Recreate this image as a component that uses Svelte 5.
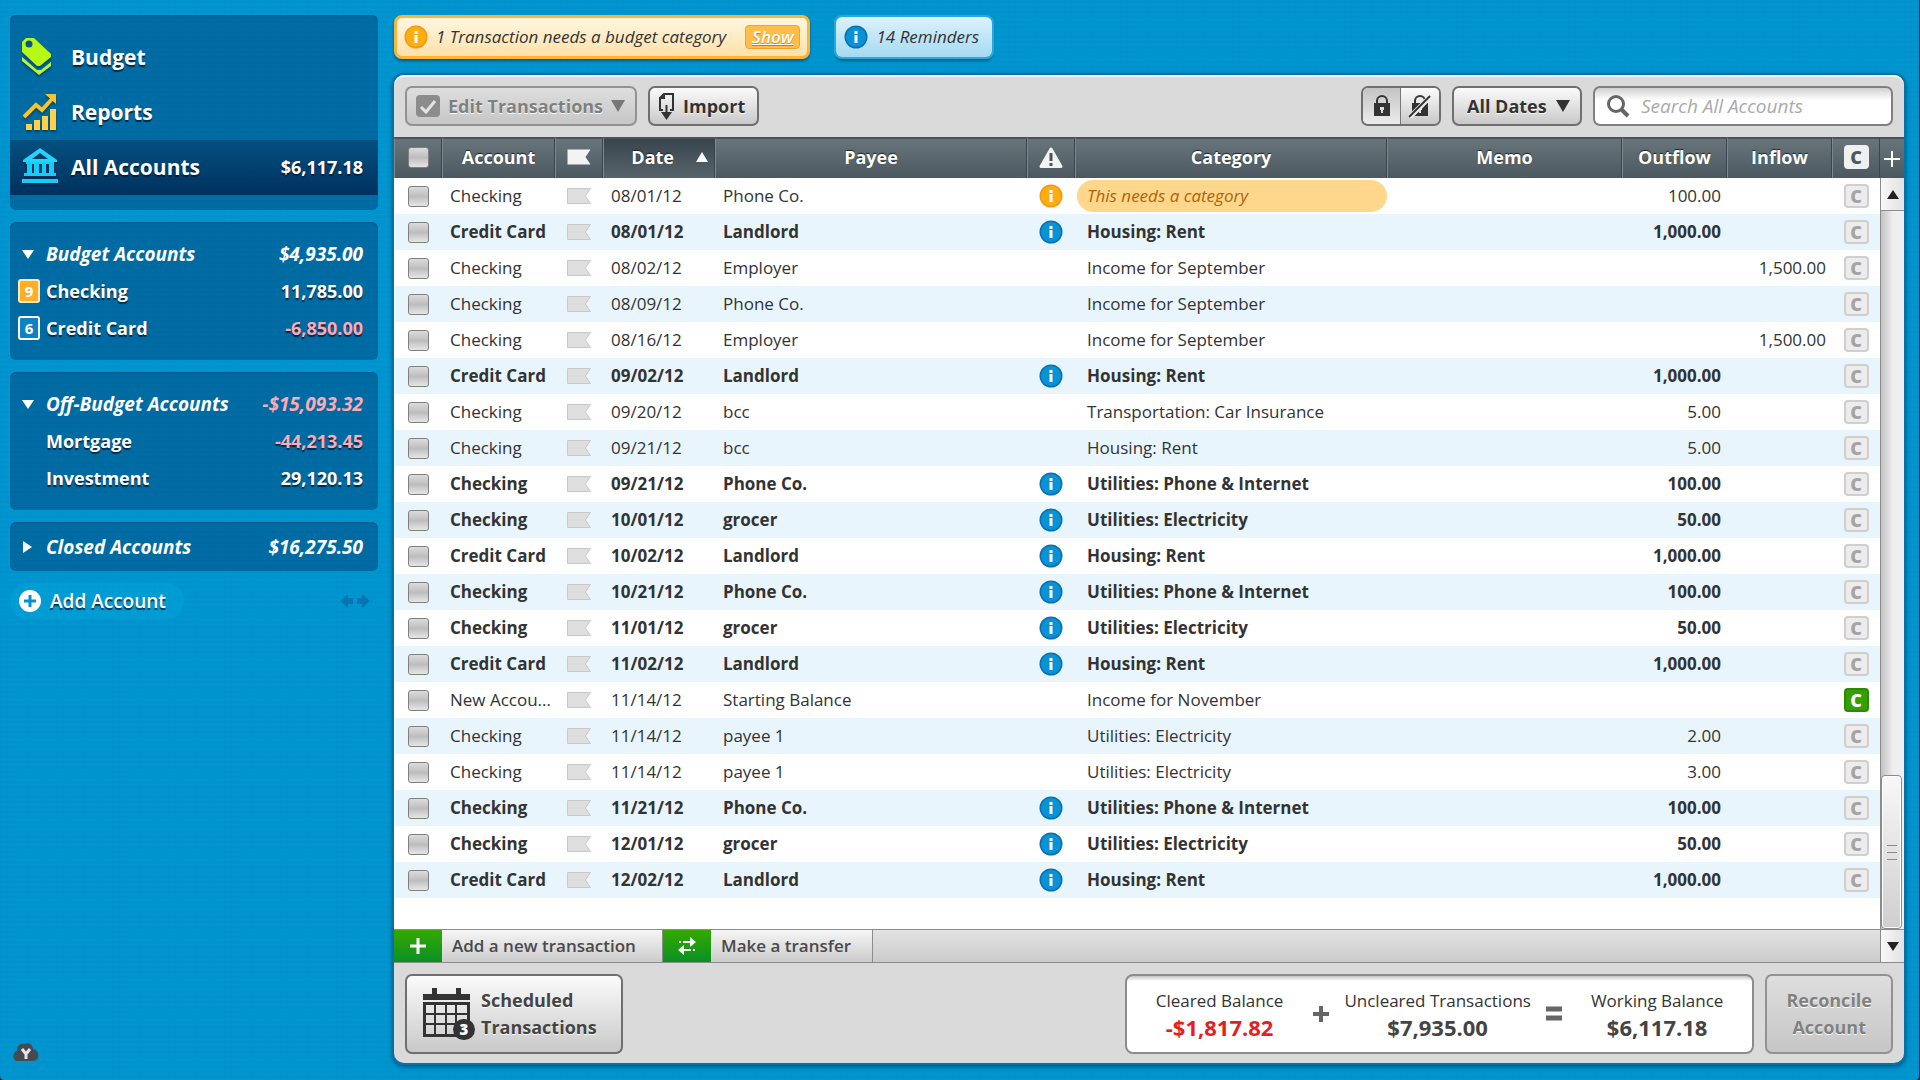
<script>
    let search = "";
    let dateRange = "All Dates";

    const budgetAccounts = [
        { name: "Checking", amount: "11,785.00", badge: "9", badgeColor: "orange" },
        { name: "Credit Card", amount: "-6,850.00", badge: "6", badgeColor: "blue" },
    ];

    const offBudgetAccounts = [
        { name: "Mortgage", amount: "-44,213.45" },
        { name: "Investment", amount: "29,120.13" },
    ];

    const groups = [
        { name: "Budget Accounts", total: "$4,935.00", open: true, accounts: budgetAccounts },
        { name: "Off-Budget Accounts", total: "-$15,093.32", open: true, accounts: offBudgetAccounts },
        { name: "Closed Accounts", total: "$16,275.50", open: false, accounts: [] },
    ];

    // scheduled entries are shown in bold with a blue info icon
    function row(account, date, payee, category, outflow = "", inflow = "", extra = {}) {
        return { account, date, payee, category, outflow, inflow, ...extra };
    }
    const scheduled = { scheduled: true };

    const transactions = [
        row("Checking", "08/01/12", "Phone Co.", "This needs a category", "100.00", "", { missing: true }),
        row("Credit Card", "08/01/12", "Landlord", "Housing: Rent", "1,000.00", "", scheduled),
        row("Checking", "08/02/12", "Employer", "Income for September", "", "1,500.00"),
        row("Checking", "08/09/12", "Phone Co.", "Income for September"),
        row("Checking", "08/16/12", "Employer", "Income for September", "", "1,500.00"),
        row("Credit Card", "09/02/12", "Landlord", "Housing: Rent", "1,000.00", "", scheduled),
        row("Checking", "09/20/12", "bcc", "Transportation: Car Insurance", "5.00"),
        row("Checking", "09/21/12", "bcc", "Housing: Rent", "5.00"),
        row("Checking", "09/21/12", "Phone Co.", "Utilities: Phone & Internet", "100.00", "", scheduled),
        row("Checking", "10/01/12", "grocer", "Utilities: Electricity", "50.00", "", scheduled),
        row("Credit Card", "10/02/12", "Landlord", "Housing: Rent", "1,000.00", "", scheduled),
        row("Checking", "10/21/12", "Phone Co.", "Utilities: Phone & Internet", "100.00", "", scheduled),
        row("Checking", "11/01/12", "grocer", "Utilities: Electricity", "50.00", "", scheduled),
        row("Credit Card", "11/02/12", "Landlord", "Housing: Rent", "1,000.00", "", scheduled),
        row("New Accou...", "11/14/12", "Starting Balance", "Income for November", "", "", { cleared: true }),
        row("Checking", "11/14/12", "payee 1", "Utilities: Electricity", "2.00"),
        row("Checking", "11/14/12", "payee 1", "Utilities: Electricity", "3.00"),
        row("Checking", "11/21/12", "Phone Co.", "Utilities: Phone & Internet", "100.00", "", scheduled),
        row("Checking", "12/01/12", "grocer", "Utilities: Electricity", "50.00", "", scheduled),
        row("Credit Card", "12/02/12", "Landlord", "Housing: Rent", "1,000.00", "", scheduled),
    ];
</script>

{#snippet info(color)}
    <svg class="info-icon" width="24" height="24" viewBox="0 0 24 24" aria-hidden="true">
        <circle cx="12" cy="12" r="11.5" fill={color == "orange" ? "#f09a14" : "#0a70b0"} />
        <circle cx="12" cy="12" r="10" fill={color == "orange" ? "#ffae12" : "#0a92d6"} />
        <path d="M10.5 6h3v3h-3z M10.5 10h3v8h-3z" fill="#fff" />
    </svg>
{/snippet}

{#snippet flag(kind)}
    <svg class="flag {kind}" width="24" height="16" viewBox="0 0 24 16" aria-hidden="true">
        <path d="M0.5 0.5H23.5L18.5 8L23.5 15.5H0.5Z" />
    </svg>
{/snippet}

<div class="page">
    <aside class="sidebar">
        <nav class="box nav">
            <a class="nav-item" href="#budget">
                <svg width="36" height="40" viewBox="0 0 36 40" aria-hidden="true">
                    <path d="M0 20L15 33H19L29 25V29L17 38L0 24Z" fill="#b8f53c" />
                    <path d="M4 1H12L29 17V20L18 29H15L0 15V5Z" fill="#b6f816" />
                    <circle cx="7" cy="7" r="3.5" fill="#00568c" />
                </svg>
                <span>Budget</span>
            </a>
            <a class="nav-item" href="#reports">
                <svg width="36" height="40" viewBox="0 0 36 40" aria-hidden="true">
                    <path d="M2 25L14 13L20 18L30 7" fill="none" stroke="#f9c32a" stroke-width="4" />
                    <path d="M23 2H34V12Z" fill="#f9c32a" />
                    <path d="M4 32h6v6H4z M12 28h6v10h-6z M20 24h6v14h-6z M28 17h6v21h-6z" fill="#ffd04a" />
                </svg>
                <span>Reports</span>
            </a>
            <a class="nav-item selected" href="#accounts">
                <svg width="36" height="40" viewBox="0 0 36 40" aria-hidden="true">
                    <path d="M1 13L18 1L35 13V15H1Z M10 12H26L18 6Z" fill="#22d4fb" fill-rule="evenodd" />
                    <path d="M4 15h28v2H4z M5 16h5v12H5z M12 16h5v12h-5z M20 16h4v12h-4z M27 16h5v12h-5z M2 26h32v3H2z M0 32h36v4H0z" fill="#16cdfa" />
                </svg>
                <span>All Accounts</span>
                <span class="amount">$6,117.18</span>
            </a>
        </nav>

        {#each groups as group}
            <section class="box group" class:closed={!group.open}>
                <button class="line group-head">
                    <svg width="12" height="12" viewBox="0 0 12 12" aria-hidden="true">
                        <path d={group.open ? "M0 2H12L6 11Z" : "M1 0L10 6L1 12Z"} fill="#fff" />
                    </svg>
                    <span>{group.name}</span>
                    <span class="amount" class:negative={group.total.startsWith("-")}>{group.total}</span>
                </button>
                {#each group.accounts as account}
                    <a class="line" href="#account">
                        {#if account.badge}
                            <span class="badge {account.badgeColor}">{account.badge}</span>
                        {/if}
                        <span>{account.name}</span>
                        <span class="amount" class:negative={account.amount.startsWith("-")}>{account.amount}</span>
                    </a>
                {/each}
            </section>
        {/each}

        <div class="add-line">
            <button class="add-account">
                <svg width="22" height="22" viewBox="0 0 22 22" aria-hidden="true">
                    <circle cx="11" cy="11" r="11" fill="#fff" />
                    <path d="M11 5V17M5 11H17" stroke="#078fcb" stroke-width="3" />
                </svg>
                Add Account
            </button>
            <svg class="resize" width="30" height="14" viewBox="0 0 30 14" aria-hidden="true">
                <path d="M0 7L8 0V4H13V10H8V14Z M30 7L22 0V4H17V10H22V14Z" fill="#0775b3" />
            </svg>
        </div>

        <svg class="logo" width="26" height="20" viewBox="0 0 26 20" aria-hidden="true">
            <path d="M5 18C-1 18-1 10 4 8C4 3 7 0 11 1C16-1 20 2 20 6C27 7 27 17 21 18Z" fill="#454b50" />
            <path d="M9 6L13 11L17 6M13 11V16" fill="none" stroke="#e3e3e3" stroke-width="3" />
        </svg>
    </aside>

    <main>
        <div class="alerts">
            <div class="alert warn">
                {@render info("orange")}
                <span>1 Transaction needs a budget category</span>
                <button class="show">Show</button>
            </div>
            <button class="alert note">
                {@render info("blue")}
                <span>14 Reminders</span>
            </button>
        </div>

        <div class="panel">
            <div class="toolbar">
                <button class="btn" disabled>
                    <svg width="24" height="24" viewBox="0 0 24 24" aria-hidden="true">
                        <rect y="1" width="24" height="22" rx="4" fill="#8c8c8c" />
                        <path d="M5 13L10 18L19 7" fill="none" stroke="#e4e4e4" stroke-width="3" />
                    </svg>
                    Edit Transactions
                    <svg class="caret" width="14" height="12" viewBox="0 0 14 12" aria-hidden="true"><path d="M0 0H14L7 12Z" fill="#777" /></svg>
                </button>
                <button class="btn import">
                    <svg width="18" height="28" viewBox="0 0 18 28" aria-hidden="true">
                        <path d="M5 18H2V6L6 2H15V18H12" fill="none" stroke="#333" stroke-width="2" />
                        <path d="M2 7H7V2Z" fill="#333" />
                        <path d="M7.500 13h2v7H14L8.500 28L3 20H7.500Z" fill="#333" />
                    </svg>
                    Import
                </button>

                <div class="locks">
                    <button aria-label="Show reconciled" class="pressed">
                        <svg width="18" height="24" viewBox="0 0 18 24" aria-hidden="true">
                            <path d="M4 10V7a5 5 0 0 1 10 0v3" fill="none" stroke="#333" stroke-width="2" />
                            <path d="M1 9H17V22H1Z" fill="#333" />
                            <path d="M7 13h4v3h-1v3H8v-3H7z" fill="#ddd" />
                        </svg>
                    </button>
                    <button aria-label="Hide reconciled">
                        <svg width="24" height="24" viewBox="0 0 24 24" aria-hidden="true">
                            <path d="M7 10V7a5 5 0 0 1 10 0v3" fill="none" stroke="#333" stroke-width="2" />
                            <path d="M4 9H20V22H4Z" fill="#333" />
                            <path d="M10 13h4v3h-1v3h-2v-3h-1z" fill="#ddd" />
                            <path d="M1 24L23 2" stroke="#eee" stroke-width="5" />
                            <path d="M1 23L22 2" stroke="#333" stroke-width="2" />
                        </svg>
                    </button>
                </div>
                <div class="dates">
                    <select class="btn" aria-label="Date range" bind:value={dateRange}>
                        <option>All Dates</option>
                        <option>This Month</option>
                    </select>
                    <svg width="14" height="12" viewBox="0 0 14 12" aria-hidden="true"><path d="M0 0H14L7 12Z" fill="#333" /></svg>
                </div>
                <label class="search">
                    <svg width="24" height="24" viewBox="0 0 24 24" aria-hidden="true">
                        <circle cx="10" cy="10" r="7.500" fill="none" stroke="#666" stroke-width="3" />
                        <path d="M15 15L22 22" stroke="#666" stroke-width="4" />
                    </svg>
                    <input type="text" aria-label="Search" placeholder="Search All Accounts" bind:value={search} />
                </label>
            </div>

            <div class="register">
                <div class="register-main">
                    <div class="table-space">
                        <table>
                            <colgroup>
                                <col class="w-check" />
                                <col class="w-account" />
                                <col class="w-check" />
                                <col class="w-date" />
                                <col class="w-text" />
                                <col class="w-check" />
                                <col class="w-text" />
                                <col />
                                <col class="w-money" />
                                <col class="w-money" />
                                <col class="w-check" />
                            </colgroup>
                            <thead>
                                <tr>
                                    <th><input type="checkbox" aria-label="Select all" /></th>
                                    <th>Account</th>
                                    <th>{@render flag("light")}</th>
                                    <th class="sorted">
                                        <div class="sort">
                                            <span>Date</span>
                                            <svg width="12" height="10" viewBox="0 0 12 10" aria-hidden="true"><path d="M6 0L12 10H0Z" fill="#fff" /></svg>
                                        </div>
                                    </th>
                                    <th>Payee</th>
                                    <th>
                                        <svg width="26" height="24" viewBox="0 0 26 24" aria-hidden="true">
                                            <path d="M13 4L23 21.500H3Z" fill="#f2f2f2" stroke="#f2f2f2" stroke-width="3" stroke-linejoin="round" />
                                            <path d="M11.500 8h3v8h-3z M11.500 18h3v3h-3z" fill="#465258" />
                                        </svg>
                                    </th>
                                    <th>Category</th>
                                    <th>Memo</th>
                                    <th>Outflow</th>
                                    <th>Inflow</th>
                                    <th><span class="cleared-mark light">C</span></th>
                                </tr>
                            </thead>
                            <tbody>
                                {#each transactions as t, i}
                                    <tr class:bold={t.scheduled} class:stripe={i % 2 == 1}>
                                        <td class="center"><input type="checkbox" aria-label="Select transaction" /></td>
                                        <td>{t.account}</td>
                                        <td class="center">{@render flag("dim")}</td>
                                        <td>{t.date}</td>
                                        <td>{t.payee}</td>
                                        <td class="center">
                                            {#if t.missing}
                                                {@render info("orange")}
                                            {:else if t.scheduled}
                                                {@render info("blue")}
                                            {/if}
                                        </td>
                                        <td class="category">
                                            <div class:missing={t.missing}>{t.category}</div>
                                        </td>
                                        <td></td>
                                        <td class="money">{t.outflow}</td>
                                        <td class="money">{t.inflow}</td>
                                        <td class="center">
                                            <button class="cleared-mark" class:on={t.cleared}>C</button>
                                        </td>
                                    </tr>
                                {/each}
                            </tbody>
                        </table>
                    </div>
                    <div class="add-bar">
                        <button>
                            <span class="green">
                                <svg width="16" height="16" viewBox="0 0 16 16" aria-hidden="true"><path d="M8 0V16M0 8H16" stroke="#fff" stroke-width="3" /></svg>
                            </span>
                            <span class="label">Add a new transaction</span>
                        </button>
                        <button class="transfer">
                            <span class="green">
                                <svg width="18" height="18" viewBox="0 0 18 18" aria-hidden="true">
                                    <path d="M1 4h2v2H1z M5 4h7V0l6 5l-6 5V6H5z M15 12h2v2h-2z M13 14H6v4L0 13l6-5v4h7z" fill="#fff" />
                                </svg>
                            </span>
                            <span class="label">Make a transfer</span>
                        </button>
                    </div>
                </div>

                <div class="scroll-column">
                    <button class="add-column" aria-label="Choose columns">
                        <svg width="16" height="16" viewBox="0 0 16 16" aria-hidden="true"><path d="M8 0V16M0 8H16" stroke="#fff" stroke-width="2" /></svg>
                    </button>
                    <button class="arrow up" aria-label="Scroll up">
                        <svg width="12" height="9" viewBox="0 0 12 9" aria-hidden="true"><path d="M6 0L12 9H0Z" fill="#222" /></svg>
                    </button>
                    <div class="track">
                        <div class="thumb">
                            <i></i><i></i><i></i>
                        </div>
                    </div>
                    <button class="arrow down" aria-label="Scroll down">
                        <svg width="12" height="9" viewBox="0 0 12 9" aria-hidden="true"><path d="M0 0H12L6 9Z" fill="#222" /></svg>
                    </button>
                </div>
            </div>

            <footer>
                <button class="btn big scheduled">
                    <span class="calendar">
                        <svg width="48" height="52" viewBox="0 0 48 52" aria-hidden="true">
                            <path d="M9 0h5v6h19V0h5v6h9v6H0V6h9z" fill="#333" />
                            <path d="M0 14h47v35H0z M3 17v8h8v-8z M13 17v8h9v-8z M24 17v8h8v-8z M34 17v8h10v-8z M3 27v8h8v-8z M13 27v8h9v-8z M24 27v8h8v-8z M34 27v8h10v-8z M3 37v9h8v-9z M13 37v9h9v-9z M24 37v9h8v-9z M34 37v9h10v-9z" fill="#333" fill-rule="evenodd" />
                        </svg>
                        <b>3</b>
                    </span>
                    <span>Scheduled<br />Transactions</span>
                </button>

                <div class="balances">
                    <div class="cleared">
                        <span>Cleared Balance</span>
                        <strong class="red">-$1,817.82</strong>
                    </div>
                    <svg width="16" height="16" viewBox="0 0 16 16" aria-hidden="true"><path d="M8 0V16M0 8H16" stroke="#666" stroke-width="4" /></svg>
                    <div>
                        <span>Uncleared Transactions</span>
                        <strong>$7,935.00</strong>
                    </div>
                    <svg width="16" height="16" viewBox="0 0 16 16" aria-hidden="true"><path d="M0 3H16M0 12H16" stroke="#666" stroke-width="5" /></svg>
                    <div class="working">
                        <span>Working Balance</span>
                        <strong>$6,117.18</strong>
                    </div>
                </div>
                <button class="btn big" disabled>Reconcile<br />Account</button>
            </footer>
        </div>
    </main>
</div>

<style>
    :global(body) {
        background-color: #04212f;
    }

    .page, .page :global(*) {
        box-sizing: border-box;
    }

    .page {
        display: flex;
        gap: 16px;
        min-height: 100vh;
        padding: 15px 15px 17px 10px;
        border-right: 1px solid #04212f;
        border-radius: 0 0 4px 4px;
        font-family: "Open Sans", "Noto Sans", sans-serif;
        font-size: 17px;
        line-height: 24px;
        color: #333;
        background:
            repeating-linear-gradient(0deg, rgba(255, 255, 255, 0.02) 0 1px, transparent 1px 5px),
            repeating-linear-gradient(90deg, rgba(0, 40, 90, 0.02) 0 1px, transparent 1px 7px),
            #0094cf;
    }

    button {
        margin: 0;
        padding: 0;
        border: none;
        background: none;
        font: inherit;
        color: inherit;
        cursor: pointer;
    }

    svg {
        flex: none;
        display: block;
    }

    /* sidebar */
    .sidebar {
        display: flex;
        flex-direction: column;
        flex: none;
        width: 368px;
        color: #fff;
        font-size: 18px;
        font-weight: 700;
        text-shadow: 0 2px 1px rgba(0, 25, 50, 0.8);
    }

    .sidebar a {
        color: #fff;
        text-decoration: none;
    }

    .box {
        margin-bottom: 12px;
        border-radius: 6px;
        background-color: rgba(0, 58, 108, 0.45);
        box-shadow: inset 0 1px 2px rgba(0, 40, 80, 0.3);
    }

    .nav {
        padding: 15px 0;
        font-size: 21px;
    }

    .nav-item {
        display: flex;
        align-items: center;
        gap: 13px;
        height: 55px;
        padding: 0 15px 2px 12px;
    }

    .nav-item.selected {
        background: linear-gradient(#04507f, #00315f);
    }

    .nav-item svg {
        filter: drop-shadow(0 2px 1px rgba(0, 25, 50, 0.5));
    }

    .amount {
        margin-left: auto;
        font-size: 18px;
    }

    .negative {
        color: #ffa9b4;
    }

    .group {
        padding: 13px 0 14px;
    }

    .group.closed {
        padding: 6px 0;
    }

    .line {
        display: flex;
        align-items: center;
        width: 100%;
        height: 37px;
        padding: 0 15px 0 36px;
    }

    .group-head {
        gap: 12px;
        padding-left: 12px;
        font-size: 19px;
        font-style: italic;
    }

    .group-head .amount {
        font-size: 19px;
    }

    .badge {
        width: 22px;
        height: 24px;
        margin: 0 6px 0 -28px;
        border: 2px solid #fff;
        border-radius: 3px;
        font-size: 15px;
        line-height: 20px;
        text-align: center;
        text-shadow: none;
    }

    .badge.orange {
        background-color: #ffae26;
        border-color: #ffe9bd;
    }

    .badge.blue {
        background-color: #0d83c6;
    }

    .add-line {
        display: flex;
        align-items: center;
        justify-content: space-between;
        padding-right: 8px;
    }

    .add-account {
        display: flex;
        align-items: center;
        gap: 9px;
        height: 36px;
        padding: 0 18px 0 9px;
        border-radius: 18px;
        background-color: rgba(0, 180, 225, 0.25);
        font-size: 19px;
        font-weight: 600;
        text-shadow: inherit;
    }

    .logo {
        margin: auto 0 0 3px;
    }

    /* alerts */
    main {
        display: flex;
        flex-direction: column;
        flex: 1;
        min-width: 0;
    }

    .alerts {
        display: flex;
        align-items: center;
        gap: 26px;
        margin-bottom: 16px;
    }

    .alert {
        display: flex;
        align-items: center;
        gap: 8px;
        font-style: italic;
        font-size: 17px;
    }

    .warn {
        height: 44px;
        padding: 0 7px;
        border: 3px solid #fcb53b;
        border-radius: 8px;
        background: linear-gradient(#fff6e2, #ffe1a8);
        box-shadow: 0 2px 3px rgba(0, 0, 0, 0.4);
    }

    .note {
        height: 40px;
        padding: 0 13px 0 8px;
        border-radius: 6px;
        background: linear-gradient(#dcf2fc, #a5daf3);
        box-shadow: 0 0 0 2px #2aa7dd, 0 4px 3px rgba(0, 0, 0, 0.35);
    }

    .show {
        height: 24px;
        margin-left: 11px;
        padding: 0 6px;
        border: 1px solid #f2a32c;
        border-radius: 4px;
        background-color: #ffbe49;
        color: #fff;
        font-weight: 600;
        line-height: 20px;
        text-decoration: underline;
        text-shadow: 0 1px 1px rgba(150, 80, 0, 0.6);
    }

    /* panel */
    .panel {
        display: flex;
        flex-direction: column;
        flex: 1;
        border-radius: 10px;
        background-color: #dadada;
        box-shadow: 0 0 0 2px #0572a3, 0 2px 4px 2px rgba(0, 50, 90, 0.6), inset 0 2px 0 #f4f4f4;
        overflow: hidden;
    }

    .toolbar {
        display: flex;
        align-items: center;
        gap: 11px;
        padding: 11px;
    }

    .btn {
        display: flex;
        align-items: center;
        gap: 8px;
        height: 40px;
        padding: 0 10px 0 9px;
        border: 2px solid #6f6f6f;
        border-radius: 7px;
        background: linear-gradient(#fbfbfb, #c9c9c9);
        font-size: 18px;
        font-weight: 700;
        color: #333;
        text-shadow: 0 1px 0 #fff;
    }

    .btn:disabled {
        border-color: #929292;
        background: linear-gradient(#dedede, #c6c6c6);
        color: #808080;
    }

    .import {
        gap: 7px;
        padding: 0 12px 0 8px;
    }

    .locks {
        display: flex;
        height: 40px;
        margin-left: auto;
        border: 2px solid #6f6f6f;
        border-radius: 7px;
        overflow: hidden;
    }

    .locks button {
        display: flex;
        align-items: center;
        justify-content: center;
        width: 38px;
        background: linear-gradient(#fbfbfb, #c9c9c9);
    }

    .locks .pressed {
        border-right: 1px solid #777;
        background: linear-gradient(#c4c4c4, #ececec);
    }

    .dates {
        display: grid;
        align-items: center;
    }

    .dates select {
        grid-area: 1 / 1;
        width: 130px;
        padding-left: 13px;
        appearance: none;
        font-family: inherit;
    }

    .dates svg {
        grid-area: 1 / 1;
        justify-self: end;
        margin-right: 12px;
        pointer-events: none;
    }

    .search {
        display: flex;
        align-items: center;
        gap: 11px;
        width: 300px;
        height: 40px;
        padding: 0 11px;
        border: 2px solid #808080;
        border-radius: 7px;
        background: linear-gradient(#d0d0d0, #fff 12px);
    }

    .search input {
        flex: 1;
        min-width: 0;
        padding: 0;
        border: none;
        outline: none;
        background: none;
        font: inherit;
        font-size: 19px;
        font-style: italic;
    }

    .search input::placeholder {
        color: #aaa;
    }

    /* register */
    .register {
        display: flex;
        flex: 1;
    }

    .register-main {
        display: flex;
        flex-direction: column;
        flex: 1;
        min-width: 0;
    }

    .table-space {
        flex: 1;
        background-color: #fff;
    }

    table {
        width: 100%;
        table-layout: fixed;
        border-spacing: 0;
    }

    .w-check {
        width: 48px;
    }

    .w-account {
        width: 113px;
    }

    .w-date {
        width: 112px;
    }

    .w-text {
        width: 21%;
    }

    .w-money {
        width: 105px;
    }

    th {
        height: 41px;
        padding: 0 0 3px;
        border-top: 2px solid #4c5357;
        border-right: 1px solid #3b464c;
        border-left: 1px solid #7d888d;
        background: linear-gradient(#68757b, #4b585f);
        color: #fff;
        font-size: 18px;
        font-weight: 700;
        text-align: center;
        text-shadow: 0 -1px 1px #1c2429;
    }

    th.sorted {
        background: linear-gradient(#38454e, #57646b);
    }

    .sort {
        display: flex;
        align-items: center;
        justify-content: flex-end;
        gap: 22px;
        padding-right: 6px;
    }

    th svg, td svg {
        margin: 0 auto;
    }

    .sort svg {
        margin: 0;
    }

    td {
        height: 36px;
        padding: 0 6px 0 8px;
        white-space: nowrap;
    }

    td.center {
        padding: 0;
        text-align: center;
    }

    td.category {
        padding: 0 0 0 2px;
    }

    .category div {
        height: 32px;
        padding-left: 10px;
        line-height: 32px;
    }

    .category .missing {
        border-radius: 16px;
        background-color: #ffd78c;
        color: #b06208;
        font-style: italic;
    }

    .money {
        text-align: right;
    }

    .stripe {
        background-color: #e9f5fc;
    }

    .bold {
        font-weight: 700;
    }

    input[type="checkbox"] {
        display: block;
        width: 21px;
        height: 21px;
        margin: 0 auto;
        appearance: none;
        border: 1px solid #7f7f7f;
        border-radius: 3px;
        background: linear-gradient(#dcdcdc, #bdbdbd 50%, #e6e6e6);
    }

    .flag.light {
        fill: #f3f3f3;
    }

    .flag.dim {
        fill: #dedede;
        stroke: #c9c9c9;
    }

    .cleared-mark {
        display: block;
        width: 25px;
        height: 24px;
        margin: 0 auto;
        border: 2px solid #cfcfcf;
        border-radius: 4px;
        background-color: #ececec;
        color: #a4a4a4;
        font-size: 18px;
        font-weight: 800;
        line-height: 20px;
        text-align: center;
        text-shadow: none;
    }

    .cleared-mark.on {
        border-color: #2c8a0a;
        background-color: #35a000;
        color: #fff;
    }

    .cleared-mark.light {
        border-color: #f0f0f0;
        background-color: #f0f0f0;
        color: #4b585f;
    }

    .add-bar {
        display: flex;
        height: 34px;
        border-top: 1px solid #8c8c8c;
        border-bottom: 1px solid #8c8c8c;
        background: linear-gradient(#e2e2e2, #cbcbcb);
    }

    .add-bar button {
        display: flex;
        border-right: 1px solid #8c8c8c;
        font-weight: 600;
        color: #4a4a4a;
    }

    .green {
        display: flex;
        align-items: center;
        justify-content: center;
        width: 48px;
        background: linear-gradient(#35a800, #0a9024);
    }

    .label {
        width: 220px;
        padding-left: 10px;
        background: linear-gradient(#f6f6f6, #cccccc);
        line-height: 32px;
        text-align: left;
    }

    .transfer .label {
        width: 161px;
    }

    .scroll-column {
        display: flex;
        flex-direction: column;
        flex: none;
        width: 24px;
    }

    .add-column {
        display: flex;
        align-items: center;
        justify-content: center;
        height: 41px;
        border-top: 2px solid #4c5357;
        background: linear-gradient(#68757b, #4b585f);
    }

    .arrow {
        display: flex;
        align-items: center;
        justify-content: center;
        height: 33px;
        border-left: 1px solid #8c8c8c;
        border-bottom: 1px solid #8c8c8c;
        background: linear-gradient(90deg, #f8f8f8, #e2e2e2);
    }

    .arrow.down {
        height: 34px;
        border-top: 1px solid #8c8c8c;
    }

    .track {
        display: flex;
        flex-direction: column;
        justify-content: flex-end;
        flex: 1;
        padding-right: 2px;
        border-left: 1px solid #8c8c8c;
        background: linear-gradient(90deg, #c2c2c2, #efefef 12px);
    }

    .thumb {
        display: flex;
        flex-direction: column;
        align-items: center;
        justify-content: center;
        gap: 6px;
        height: 154px;
        border: 1px solid #8a8a8a;
        border-radius: 4px;
        background: linear-gradient(#f8f8f8, #cfcfcf);
        box-shadow: inset 0 0 0 1px #fff;
    }

    .thumb i {
        width: 10px;
        height: 1px;
        background-color: #8a8a8a;
    }

    /* footer */
    footer {
        display: flex;
        align-items: center;
        gap: 11px;
        padding: 11px 11px 9px;
    }

    .big {
        justify-content: center;
        height: 80px;
        padding: 0 19px;
        line-height: 27px;
    }

    .scheduled {
        gap: 10px;
        padding: 0 24px 0 16px;
        color: #444;
        text-align: left;
    }

    .calendar {
        position: relative;
    }

    .calendar b {
        position: absolute;
        right: -4px;
        bottom: 0;
        width: 22px;
        height: 21px;
        border-radius: 11px;
        background-color: #333;
        color: #fff;
        font-size: 15px;
        line-height: 20px;
        text-align: center;
        text-shadow: none;
    }

    .balances {
        display: flex;
        align-items: center;
        justify-content: center;
        gap: 15px;
        height: 80px;
        margin-left: auto;
        padding: 0 29px;
        border: 2px solid #8c8c8c;
        border-radius: 8px;
        background: linear-gradient(#c4c4c4, #fff 5px);
    }

    .balances div {
        display: flex;
        flex-direction: column;
        align-items: center;
        line-height: 27px;
    }

    .balances .cleared {
        margin-right: 15px;
    }

    .balances .working {
        margin-left: 14px;
    }

    .balances strong {
        font-size: 22px;
        font-weight: 700;
        color: #444;
    }

    .balances .red {
        color: #e61e1e;
    }
</style>
